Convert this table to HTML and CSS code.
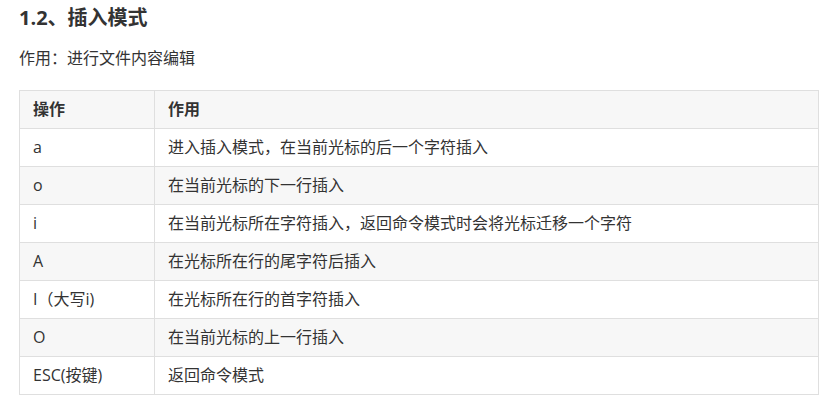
FILE: index.html
```html
<!DOCTYPE html>
<html lang="zh">
<head>
<meta charset="utf-8">
<link rel="stylesheet" href="styles.css">
</head>
<body>
<div class="page">
  <h3 class="title">1.2、插入模式</h3>
  <p class="desc">作用：进行文件内容编辑</p>
  <table class="tbl">
    <thead>
      <tr><th class="c1">操作</th><th>作用</th></tr>
    </thead>
    <tbody>
      <tr><td>a</td><td>进入插入模式，在当前光标的后一个字符插入</td></tr>
      <tr><td>o</td><td>在当前光标的下一行插入</td></tr>
      <tr><td>i</td><td>在当前光标所在字符插入，返回命令模式时会将光标迁移一个字符</td></tr>
      <tr><td>A</td><td>在光标所在行的尾字符后插入</td></tr>
      <tr><td>I（大写i)</td><td>在光标所在行的首字符插入</td></tr>
      <tr><td>O</td><td>在当前光标的上一行插入</td></tr>
      <tr><td>ESC(按键)</td><td>返回命令模式</td></tr>
    </tbody>
  </table>
</div>
</body>
</html>
```
FILE: styles.css
```css
html, body {
  margin: 0;
  padding: 0;
  background: #fff;
}
body {
  font-family: "Open Sans", "Noto Sans CJK SC", sans-serif;
  color: #333;
  font-size: 16px;
}
.page {
  padding: 0 0 0 19px;
}
.title {
  margin: 0;
  padding-top: 4px;
  font-size: 20px;
  line-height: 28px;
  font-weight: 700;
  color: #333;
}
.desc {
  margin: 14px 0 0 0;
  line-height: 24px;
  font-size: 16px;
}
.tbl {
  margin-top: 20px;
  border-collapse: collapse;
  width: 800px;
}
.tbl th, .tbl td {
  border: 1px solid #dfdfdf;
  padding: 0 13px;
  text-align: left;
  line-height: 37px;
  font-size: 16px;
}
.tbl th {
  font-weight: 700;
  background: #f7f7f7;
}
.tbl .c1 {
  width: 108px;
}
.tbl tbody tr:nth-child(even) td {
  background: #f7f7f7;
}
```
